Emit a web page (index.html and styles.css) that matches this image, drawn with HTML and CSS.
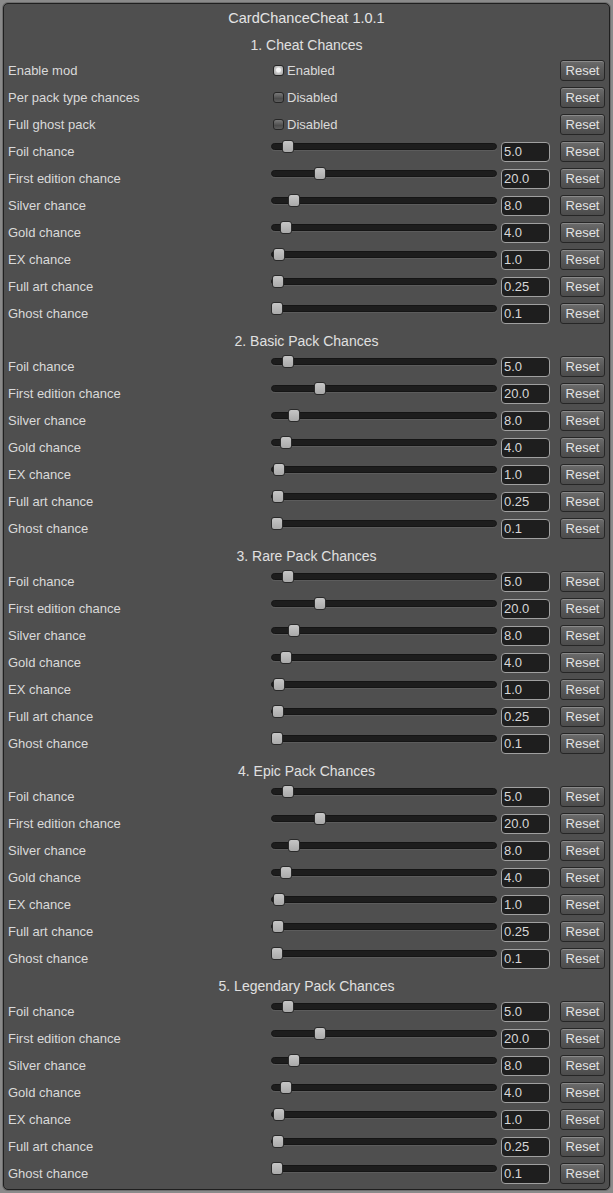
FILE: index.html
```html
<!DOCTYPE html>
<html>
<head>
<meta charset="utf-8">
<title>CardChanceCheat</title>
<link rel="stylesheet" href="styles.css">
</head>
<body>
<div class="window">
  <div class="title">CardChanceCheat 1.0.1</div>

  <div class="header">1. Cheat Chances</div>
  <div class="row"><span class="label">Enable mod</span><div class="toggle"><span class="box on"></span><span>Enabled</span></div><button class="reset">Reset</button></div>
  <div class="row"><span class="label">Per pack type chances</span><div class="toggle"><span class="box"></span><span>Disabled</span></div><button class="reset">Reset</button></div>
  <div class="row"><span class="label">Full ghost pack</span><div class="toggle"><span class="box"></span><span>Disabled</span></div><button class="reset">Reset</button></div>
  <div class="row"><span class="label">Foil chance</span><div class="slider"><div class="track"></div><div class="thumb" style="left:calc((100% - 12px) * 0.05)"></div></div><div class="field">5.0</div><button class="reset">Reset</button></div>
  <div class="row"><span class="label">First edition chance</span><div class="slider"><div class="track"></div><div class="thumb" style="left:calc((100% - 12px) * 0.2)"></div></div><div class="field">20.0</div><button class="reset">Reset</button></div>
  <div class="row"><span class="label">Silver chance</span><div class="slider"><div class="track"></div><div class="thumb" style="left:calc((100% - 12px) * 0.08)"></div></div><div class="field">8.0</div><button class="reset">Reset</button></div>
  <div class="row"><span class="label">Gold chance</span><div class="slider"><div class="track"></div><div class="thumb" style="left:calc((100% - 12px) * 0.04)"></div></div><div class="field">4.0</div><button class="reset">Reset</button></div>
  <div class="row"><span class="label">EX chance</span><div class="slider"><div class="track"></div><div class="thumb" style="left:calc((100% - 12px) * 0.01)"></div></div><div class="field">1.0</div><button class="reset">Reset</button></div>
  <div class="row"><span class="label">Full art chance</span><div class="slider"><div class="track"></div><div class="thumb" style="left:calc((100% - 12px) * 0.0025)"></div></div><div class="field">0.25</div><button class="reset">Reset</button></div>
  <div class="row"><span class="label">Ghost chance</span><div class="slider"><div class="track"></div><div class="thumb" style="left:calc((100% - 12px) * 0.001)"></div></div><div class="field">0.1</div><button class="reset">Reset</button></div>

  <div class="header">2. Basic Pack Chances</div>
  <div class="row"><span class="label">Foil chance</span><div class="slider"><div class="track"></div><div class="thumb" style="left:calc((100% - 12px) * 0.05)"></div></div><div class="field">5.0</div><button class="reset">Reset</button></div>
  <div class="row"><span class="label">First edition chance</span><div class="slider"><div class="track"></div><div class="thumb" style="left:calc((100% - 12px) * 0.2)"></div></div><div class="field">20.0</div><button class="reset">Reset</button></div>
  <div class="row"><span class="label">Silver chance</span><div class="slider"><div class="track"></div><div class="thumb" style="left:calc((100% - 12px) * 0.08)"></div></div><div class="field">8.0</div><button class="reset">Reset</button></div>
  <div class="row"><span class="label">Gold chance</span><div class="slider"><div class="track"></div><div class="thumb" style="left:calc((100% - 12px) * 0.04)"></div></div><div class="field">4.0</div><button class="reset">Reset</button></div>
  <div class="row"><span class="label">EX chance</span><div class="slider"><div class="track"></div><div class="thumb" style="left:calc((100% - 12px) * 0.01)"></div></div><div class="field">1.0</div><button class="reset">Reset</button></div>
  <div class="row"><span class="label">Full art chance</span><div class="slider"><div class="track"></div><div class="thumb" style="left:calc((100% - 12px) * 0.0025)"></div></div><div class="field">0.25</div><button class="reset">Reset</button></div>
  <div class="row"><span class="label">Ghost chance</span><div class="slider"><div class="track"></div><div class="thumb" style="left:calc((100% - 12px) * 0.001)"></div></div><div class="field">0.1</div><button class="reset">Reset</button></div>

  <div class="header">3. Rare Pack Chances</div>
  <div class="row"><span class="label">Foil chance</span><div class="slider"><div class="track"></div><div class="thumb" style="left:calc((100% - 12px) * 0.05)"></div></div><div class="field">5.0</div><button class="reset">Reset</button></div>
  <div class="row"><span class="label">First edition chance</span><div class="slider"><div class="track"></div><div class="thumb" style="left:calc((100% - 12px) * 0.2)"></div></div><div class="field">20.0</div><button class="reset">Reset</button></div>
  <div class="row"><span class="label">Silver chance</span><div class="slider"><div class="track"></div><div class="thumb" style="left:calc((100% - 12px) * 0.08)"></div></div><div class="field">8.0</div><button class="reset">Reset</button></div>
  <div class="row"><span class="label">Gold chance</span><div class="slider"><div class="track"></div><div class="thumb" style="left:calc((100% - 12px) * 0.04)"></div></div><div class="field">4.0</div><button class="reset">Reset</button></div>
  <div class="row"><span class="label">EX chance</span><div class="slider"><div class="track"></div><div class="thumb" style="left:calc((100% - 12px) * 0.01)"></div></div><div class="field">1.0</div><button class="reset">Reset</button></div>
  <div class="row"><span class="label">Full art chance</span><div class="slider"><div class="track"></div><div class="thumb" style="left:calc((100% - 12px) * 0.0025)"></div></div><div class="field">0.25</div><button class="reset">Reset</button></div>
  <div class="row"><span class="label">Ghost chance</span><div class="slider"><div class="track"></div><div class="thumb" style="left:calc((100% - 12px) * 0.001)"></div></div><div class="field">0.1</div><button class="reset">Reset</button></div>

  <div class="header">4. Epic Pack Chances</div>
  <div class="row"><span class="label">Foil chance</span><div class="slider"><div class="track"></div><div class="thumb" style="left:calc((100% - 12px) * 0.05)"></div></div><div class="field">5.0</div><button class="reset">Reset</button></div>
  <div class="row"><span class="label">First edition chance</span><div class="slider"><div class="track"></div><div class="thumb" style="left:calc((100% - 12px) * 0.2)"></div></div><div class="field">20.0</div><button class="reset">Reset</button></div>
  <div class="row"><span class="label">Silver chance</span><div class="slider"><div class="track"></div><div class="thumb" style="left:calc((100% - 12px) * 0.08)"></div></div><div class="field">8.0</div><button class="reset">Reset</button></div>
  <div class="row"><span class="label">Gold chance</span><div class="slider"><div class="track"></div><div class="thumb" style="left:calc((100% - 12px) * 0.04)"></div></div><div class="field">4.0</div><button class="reset">Reset</button></div>
  <div class="row"><span class="label">EX chance</span><div class="slider"><div class="track"></div><div class="thumb" style="left:calc((100% - 12px) * 0.01)"></div></div><div class="field">1.0</div><button class="reset">Reset</button></div>
  <div class="row"><span class="label">Full art chance</span><div class="slider"><div class="track"></div><div class="thumb" style="left:calc((100% - 12px) * 0.0025)"></div></div><div class="field">0.25</div><button class="reset">Reset</button></div>
  <div class="row"><span class="label">Ghost chance</span><div class="slider"><div class="track"></div><div class="thumb" style="left:calc((100% - 12px) * 0.001)"></div></div><div class="field">0.1</div><button class="reset">Reset</button></div>

  <div class="header">5. Legendary Pack Chances</div>
  <div class="row"><span class="label">Foil chance</span><div class="slider"><div class="track"></div><div class="thumb" style="left:calc((100% - 12px) * 0.05)"></div></div><div class="field">5.0</div><button class="reset">Reset</button></div>
  <div class="row"><span class="label">First edition chance</span><div class="slider"><div class="track"></div><div class="thumb" style="left:calc((100% - 12px) * 0.2)"></div></div><div class="field">20.0</div><button class="reset">Reset</button></div>
  <div class="row"><span class="label">Silver chance</span><div class="slider"><div class="track"></div><div class="thumb" style="left:calc((100% - 12px) * 0.08)"></div></div><div class="field">8.0</div><button class="reset">Reset</button></div>
  <div class="row"><span class="label">Gold chance</span><div class="slider"><div class="track"></div><div class="thumb" style="left:calc((100% - 12px) * 0.04)"></div></div><div class="field">4.0</div><button class="reset">Reset</button></div>
  <div class="row"><span class="label">EX chance</span><div class="slider"><div class="track"></div><div class="thumb" style="left:calc((100% - 12px) * 0.01)"></div></div><div class="field">1.0</div><button class="reset">Reset</button></div>
  <div class="row"><span class="label">Full art chance</span><div class="slider"><div class="track"></div><div class="thumb" style="left:calc((100% - 12px) * 0.0025)"></div></div><div class="field">0.25</div><button class="reset">Reset</button></div>
  <div class="row"><span class="label">Ghost chance</span><div class="slider"><div class="track"></div><div class="thumb" style="left:calc((100% - 12px) * 0.001)"></div></div><div class="field">0.1</div><button class="reset">Reset</button></div>
</div>
</body>
</html>
```

FILE: styles.css
```css
html, body {
  margin: 0;
  padding: 0;
}
body {
  background: #8a8a8a;
  font-family: "Liberation Sans", Arial, sans-serif;
  font-size: 13px;
  color: #dadada;
  width: 613px;
  height: 1193px;
  overflow: hidden;
}
.window {
  margin: 3px;
  height: 1187px;
  box-sizing: border-box;
  border: 1px solid #1f1f1f;
  border-radius: 5px;
  background: #4f4f4f;
  padding: 0 0 2px 4px;
  display: flex;
  flex-direction: column;
  box-shadow: 0 0 0 1px #6e6e6e;
}
.title {
  height: 27px;
  box-sizing: border-box;
  padding-top: 4px;
  line-height: 20px;
  font-size: 14.5px;
  text-align: center;
  color: #e4e4e4;
  padding-right: 4px;
}
.header {
  height: 26px;
  box-sizing: border-box;
  padding-top: 4px;
  line-height: 20px;
  font-size: 14px;
  text-align: center;
  color: #e0e0e0;
  padding-right: 4px;
}
.row {
  height: 27px;
  display: grid;
  grid-template-columns: 263px 226px 53px 55px;
  align-items: center;
}
.label {
  white-space: nowrap;
  line-height: 16px;
}
.toggle {
  grid-column: 2 / 4;
  display: flex;
  align-items: center;
  padding-left: 2px;
  line-height: 16px;
}
.box {
  width: 11px;
  height: 11px;
  box-sizing: border-box;
  border: 1px solid #262626;
  border-radius: 3px;
  background: linear-gradient(#7a7a7a, #555 50%, #4a4a4a 55%, #5e5e5e);
  margin-right: 3px;
}
.box.on {
  background: radial-gradient(circle at 50% 45%, #f4f4f4 0 2px, #c8c8c8 3px, #9c9c9c 100%);
}
.slider {
  position: relative;
  height: 27px;
}
.track {
  position: absolute;
  left: 0;
  right: 0;
  top: 5px;
  height: 7px;
  box-sizing: border-box;
  border-radius: 4px;
  background: #1d1d1d;
  border: 1px solid #151515;
  box-shadow: 0 1px 0 #5c5c5c;
}
.thumb {
  position: absolute;
  top: 2px;
  width: 12px;
  height: 13px;
  box-sizing: border-box;
  border: 1px solid #2a2a2a;
  border-radius: 3px;
  background: linear-gradient(#c6c6c6, #a9a9a9);
}
.field {
  height: 20px;
  box-sizing: border-box;
  margin-left: 4px;
  width: 49px;
  border: 1px solid #a0a0a0;
  border-radius: 4px;
  background: #1e1e1e;
  color: #d8d8d8;
  line-height: 18px;
  padding-left: 2px;
  font-size: 13px;
}
.reset {
  grid-column: 4;
  height: 21px;
  width: 45px;
  box-sizing: border-box;
  margin: 0 0 0 10px;
  padding: 0;
  border: 1px solid #262626;
  border-radius: 3px;
  background: linear-gradient(#6c6c6c, #585858 50%, #4c4c4c);
  box-shadow: inset 0 1px 0 #8a8a8a;
  color: #e2e2e2;
  font-family: "Liberation Sans", Arial, sans-serif;
  font-size: 13px;
  line-height: 19px;
  text-align: center;
}
```
